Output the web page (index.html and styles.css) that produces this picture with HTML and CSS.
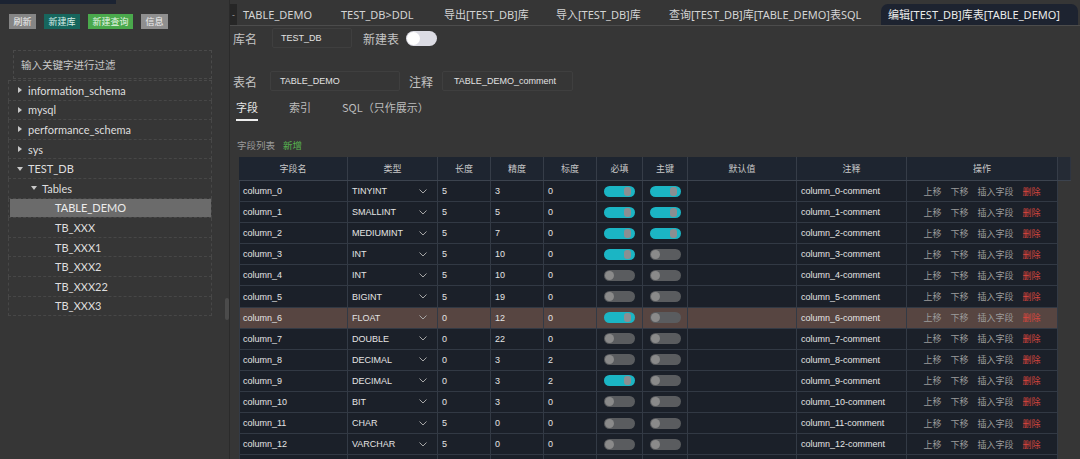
FILE: index.html
```html
<!DOCTYPE html>
<html>
<head>
<meta charset="utf-8">
<link rel="stylesheet" href="styles.css">
</head>
<body>
<div class="app">
  <aside class="side">
    <div class="side-main">
      <div class="topstrip"></div>
      <div class="btns">
        <span class="btn gray">刷新</span>
        <span class="btn teal">新建库</span>
        <span class="btn green">新建查询</span>
        <span class="btn gray2">信息</span>
      </div>
      <div class="filter">输入关键字进行过滤</div>
      <div class="tree">
        <div class="node l1"><span class="arr right"></span>information_schema</div>
        <div class="node l1"><span class="arr right"></span>mysql</div>
        <div class="node l1"><span class="arr right"></span>performance_schema</div>
        <div class="node l1"><span class="arr right"></span>sys</div>
        <div class="node l1"><span class="arr down"></span>TEST_DB</div>
        <div class="node l2"><span class="arr down"></span>Tables</div>
        <div class="node l3 sel">TABLE_DEMO</div>
        <div class="node l3">TB_XXX</div>
        <div class="node l3">TB_XXX1</div>
        <div class="node l3">TB_XXX2</div>
        <div class="node l3">TB_XXX22</div>
        <div class="node l3">TB_XXX3</div>
      </div>
    </div>
    <div class="sscroll"><div class="thumb"></div></div>
  </aside>

  <main class="main">
    <div class="tabs">
      <div class="tab t1"><span class="tabclose">-</span>TABLE_DEMO</div>
      <div class="tab t2">TEST_DB&gt;DDL</div>
      <div class="tab t3">导出[TEST_DB]库</div>
      <div class="tab t4">导入[TEST_DB]库</div>
      <div class="tab t5">查询[TEST_DB]库[TABLE_DEMO]表SQL</div>
      <div class="tab t6 active">编辑[TEST_DB]库表[TABLE_DEMO]</div>
    </div>

    <div class="content">
      <div class="frow r1">
        <span class="lbl">库名</span>
        <span class="inp i1">TEST_DB</span>
        <span class="lbl l-new">新建表</span>
        <span class="bigsw"><span class="bigknob"></span></span>
      </div>
      <div class="frow r2">
        <span class="lbl">表名</span>
        <span class="inp i2">TABLE_DEMO</span>
        <span class="lbl l-cmt">注释</span>
        <span class="inp i3">TABLE_DEMO_comment</span>
      </div>
      <div class="subtabs">
        <span class="stab on">字段</span>
        <span class="stab">索引</span>
        <span class="stab">SQL（只作展示）</span>
      </div>
      <div class="listhead"><span>字段列表</span><span class="add">新增</span></div>

      <div class="grid">
        <div class="hrow">
          <div class="hc">字段名</div>
          <div class="hc">类型</div>
          <div class="hc">长度</div>
          <div class="hc">精度</div>
          <div class="hc">标度</div>
          <div class="hc">必填</div>
          <div class="hc">主键</div>
          <div class="hc">默认值</div>
          <div class="hc">注释</div>
          <div class="hc">操作</div>
          <div class="hc gutter"></div>
        </div>

        <div class="row">
          <div class="c">column_0</div>
          <div class="c type">TINYINT<svg class="chev" width="8" height="5" viewBox="0 0 8 5"><polyline points="0.5,0.5 4,4 7.5,0.5"/></svg></div>
          <div class="c">5</div><div class="c">3</div><div class="c">0</div>
          <div class="c sw"><span class="tg on"><span class="kn"></span></span></div>
          <div class="c sw"><span class="tg on"><span class="kn"></span></span></div>
          <div class="c"></div>
          <div class="c">column_0-comment</div>
          <div class="c act"><span>上移</span><span>下移</span><span>插入字段</span><span class="del">删除</span></div>
        </div>
        <div class="row">
          <div class="c">column_1</div>
          <div class="c type">SMALLINT<svg class="chev" width="8" height="5" viewBox="0 0 8 5"><polyline points="0.5,0.5 4,4 7.5,0.5"/></svg></div>
          <div class="c">5</div><div class="c">5</div><div class="c">0</div>
          <div class="c sw"><span class="tg on"><span class="kn"></span></span></div>
          <div class="c sw"><span class="tg on"><span class="kn"></span></span></div>
          <div class="c"></div>
          <div class="c">column_1-comment</div>
          <div class="c act"><span>上移</span><span>下移</span><span>插入字段</span><span class="del">删除</span></div>
        </div>
        <div class="row">
          <div class="c">column_2</div>
          <div class="c type">MEDIUMINT<svg class="chev" width="8" height="5" viewBox="0 0 8 5"><polyline points="0.5,0.5 4,4 7.5,0.5"/></svg></div>
          <div class="c">5</div><div class="c">7</div><div class="c">0</div>
          <div class="c sw"><span class="tg on"><span class="kn"></span></span></div>
          <div class="c sw"><span class="tg on"><span class="kn"></span></span></div>
          <div class="c"></div>
          <div class="c">column_2-comment</div>
          <div class="c act"><span>上移</span><span>下移</span><span>插入字段</span><span class="del">删除</span></div>
        </div>
        <div class="row">
          <div class="c">column_3</div>
          <div class="c type">INT<svg class="chev" width="8" height="5" viewBox="0 0 8 5"><polyline points="0.5,0.5 4,4 7.5,0.5"/></svg></div>
          <div class="c">5</div><div class="c">10</div><div class="c">0</div>
          <div class="c sw"><span class="tg on"><span class="kn"></span></span></div>
          <div class="c sw"><span class="tg"><span class="kn"></span></span></div>
          <div class="c"></div>
          <div class="c">column_3-comment</div>
          <div class="c act"><span>上移</span><span>下移</span><span>插入字段</span><span class="del">删除</span></div>
        </div>
        <div class="row">
          <div class="c">column_4</div>
          <div class="c type">INT<svg class="chev" width="8" height="5" viewBox="0 0 8 5"><polyline points="0.5,0.5 4,4 7.5,0.5"/></svg></div>
          <div class="c">5</div><div class="c">10</div><div class="c">0</div>
          <div class="c sw"><span class="tg"><span class="kn"></span></span></div>
          <div class="c sw"><span class="tg"><span class="kn"></span></span></div>
          <div class="c"></div>
          <div class="c">column_4-comment</div>
          <div class="c act"><span>上移</span><span>下移</span><span>插入字段</span><span class="del">删除</span></div>
        </div>
        <div class="row">
          <div class="c">column_5</div>
          <div class="c type">BIGINT<svg class="chev" width="8" height="5" viewBox="0 0 8 5"><polyline points="0.5,0.5 4,4 7.5,0.5"/></svg></div>
          <div class="c">5</div><div class="c">19</div><div class="c">0</div>
          <div class="c sw"><span class="tg"><span class="kn"></span></span></div>
          <div class="c sw"><span class="tg"><span class="kn"></span></span></div>
          <div class="c"></div>
          <div class="c">column_5-comment</div>
          <div class="c act"><span>上移</span><span>下移</span><span>插入字段</span><span class="del">删除</span></div>
        </div>
        <div class="row hl">
          <div class="c">column_6</div>
          <div class="c type">FLOAT<svg class="chev" width="8" height="5" viewBox="0 0 8 5"><polyline points="0.5,0.5 4,4 7.5,0.5"/></svg></div>
          <div class="c">0</div><div class="c">12</div><div class="c">0</div>
          <div class="c sw"><span class="tg on"><span class="kn"></span></span></div>
          <div class="c sw"><span class="tg"><span class="kn"></span></span></div>
          <div class="c"></div>
          <div class="c">column_6-comment</div>
          <div class="c act"><span>上移</span><span>下移</span><span>插入字段</span><span class="del">删除</span></div>
        </div>
        <div class="row">
          <div class="c">column_7</div>
          <div class="c type">DOUBLE<svg class="chev" width="8" height="5" viewBox="0 0 8 5"><polyline points="0.5,0.5 4,4 7.5,0.5"/></svg></div>
          <div class="c">0</div><div class="c">22</div><div class="c">0</div>
          <div class="c sw"><span class="tg"><span class="kn"></span></span></div>
          <div class="c sw"><span class="tg"><span class="kn"></span></span></div>
          <div class="c"></div>
          <div class="c">column_7-comment</div>
          <div class="c act"><span>上移</span><span>下移</span><span>插入字段</span><span class="del">删除</span></div>
        </div>
        <div class="row">
          <div class="c">column_8</div>
          <div class="c type">DECIMAL<svg class="chev" width="8" height="5" viewBox="0 0 8 5"><polyline points="0.5,0.5 4,4 7.5,0.5"/></svg></div>
          <div class="c">0</div><div class="c">3</div><div class="c">2</div>
          <div class="c sw"><span class="tg"><span class="kn"></span></span></div>
          <div class="c sw"><span class="tg"><span class="kn"></span></span></div>
          <div class="c"></div>
          <div class="c">column_8-comment</div>
          <div class="c act"><span>上移</span><span>下移</span><span>插入字段</span><span class="del">删除</span></div>
        </div>
        <div class="row">
          <div class="c">column_9</div>
          <div class="c type">DECIMAL<svg class="chev" width="8" height="5" viewBox="0 0 8 5"><polyline points="0.5,0.5 4,4 7.5,0.5"/></svg></div>
          <div class="c">0</div><div class="c">3</div><div class="c">2</div>
          <div class="c sw"><span class="tg on"><span class="kn"></span></span></div>
          <div class="c sw"><span class="tg"><span class="kn"></span></span></div>
          <div class="c"></div>
          <div class="c">column_9-comment</div>
          <div class="c act"><span>上移</span><span>下移</span><span>插入字段</span><span class="del">删除</span></div>
        </div>
        <div class="row">
          <div class="c">column_10</div>
          <div class="c type">BIT<svg class="chev" width="8" height="5" viewBox="0 0 8 5"><polyline points="0.5,0.5 4,4 7.5,0.5"/></svg></div>
          <div class="c">0</div><div class="c">3</div><div class="c">0</div>
          <div class="c sw"><span class="tg"><span class="kn"></span></span></div>
          <div class="c sw"><span class="tg"><span class="kn"></span></span></div>
          <div class="c"></div>
          <div class="c">column_10-comment</div>
          <div class="c act"><span>上移</span><span>下移</span><span>插入字段</span><span class="del">删除</span></div>
        </div>
        <div class="row">
          <div class="c">column_11</div>
          <div class="c type">CHAR<svg class="chev" width="8" height="5" viewBox="0 0 8 5"><polyline points="0.5,0.5 4,4 7.5,0.5"/></svg></div>
          <div class="c">5</div><div class="c">0</div><div class="c">0</div>
          <div class="c sw"><span class="tg"><span class="kn"></span></span></div>
          <div class="c sw"><span class="tg"><span class="kn"></span></span></div>
          <div class="c"></div>
          <div class="c">column_11-comment</div>
          <div class="c act"><span>上移</span><span>下移</span><span>插入字段</span><span class="del">删除</span></div>
        </div>
        <div class="row">
          <div class="c">column_12</div>
          <div class="c type">VARCHAR<svg class="chev" width="8" height="5" viewBox="0 0 8 5"><polyline points="0.5,0.5 4,4 7.5,0.5"/></svg></div>
          <div class="c">5</div><div class="c">0</div><div class="c">0</div>
          <div class="c sw"><span class="tg"><span class="kn"></span></span></div>
          <div class="c sw"><span class="tg"><span class="kn"></span></span></div>
          <div class="c"></div>
          <div class="c">column_12-comment</div>
          <div class="c act"><span>上移</span><span>下移</span><span>插入字段</span><span class="del">删除</span></div>
        </div>
        <div class="row">
          <div class="c"></div><div class="c"></div><div class="c"></div><div class="c"></div><div class="c"></div>
          <div class="c"></div><div class="c"></div><div class="c"></div><div class="c"></div><div class="c"></div>
        </div>
      </div>
    </div>
  </main>
</div>
</body>
</html>
```

FILE: styles.css
```css
* { box-sizing: border-box; }

html, body {
  margin: 0;
  height: 459px;
  overflow: hidden;
  background: #363636;
  color: #dcdcdc;
  font-family: "Noto Sans", "Noto Sans CJK SC", sans-serif;
}

.app {
  display: flex;
  height: 459px;
}

/* ---------- sidebar ---------- */
.side {
  width: 229px;
  flex: none;
  display: flex;
}
.side-main { width: 225px; }
.sscroll { width: 4px; }
.thumb {
  margin-top: 298px;
  height: 22px;
  border-radius: 2px;
  background: #4b4b4b;
}

.topstrip {
  width: 116px;
  height: 4px;
  background: #1b2332;
}

.btns {
  display: flex;
  gap: 8px;
  padding: 10px 0 0 9px;
}
.btn {
  font-family: "Noto Sans CJK SC", sans-serif;
  font-size: 9px;
  line-height: 15px;
  height: 15px;
  padding: 0 4.5px;
  color: #f0f0f0;
}
.btn.gray { background: #858585; }
.btn.teal { background: #17665d; color: #d8efe9; }
.btn.green { background: #4aa94c; color: #e6f6e6; }
.btn.gray2 { background: #8f8f8f; }

.filter {
  margin: 21px 0 0 13px;
  width: 199px;
  height: 29px;
  border: 1px dashed #4a4a4a;
  padding-left: 7px;
  font-family: "Noto Sans CJK SC", sans-serif;
  font-size: 10.5px;
  line-height: 27px;
  color: #c9c9c9;
}

.tree {
  margin: 1px 0 0 8px;
  width: 204px;
  border-top: 1px dashed #4a4a4a;
}
.node {
  height: 19.6px;
  border: 1px dashed #474747;
  border-top: none;
  display: flex;
  align-items: center;
  font-family: "Lato", "Noto Sans", sans-serif;
  font-size: 11px;
  color: #dedede;
  white-space: nowrap;
}
.node.l1 { padding-left: 8px; }
.node.l2 { padding-left: 22px; }
.node.l3 { padding-left: 46px; }
.node.sel {
  background: linear-gradient(#6b6b6b, #6b6b6b) 1px 0 / calc(100% - 1px) 100% no-repeat;
  color: #ececec;
}
.arr {
  width: 0;
  height: 0;
  flex: none;
}
.arr.right {
  border-left: 4px solid #c8c8c8;
  border-top: 3px solid transparent;
  border-bottom: 3px solid transparent;
  margin-left: 1px;
  margin-right: 6px;
}
.arr.down {
  border-top: 4px solid #c8c8c8;
  border-left: 3px solid transparent;
  border-right: 3px solid transparent;
  margin-right: 5px;
}

/* ---------- main ---------- */
.main {
  flex: 1;
  min-width: 0;
  border-left: 1px solid #2b2b2b;
  display: flex;
  flex-direction: column;
}

.tabs {
  height: 26px;
  padding-top: 4px;
  border-bottom: 1px solid #4c4c4c;
  display: flex;
}
.tab {
  flex: none;
  font-size: 11px;
  line-height: 21px;
  color: #d4d4d4;
  white-space: nowrap;
  padding-left: 15px;
  font-family: "Noto Sans", "Noto Sans CJK SC", sans-serif;
}
.tab.t1 { width: 96px; padding-left: 0; display: flex; }
.tabclose {
  width: 7px;
  background: #262626;
  color: #9a9a9a;
  margin-right: 6px;
  text-align: center;
  font-size: 9px;
}
.tab.t2 { width: 103px; }
.tab.t3 { width: 112px; }
.tab.t4 { width: 113px; }
.tab.t5 { width: 227px; }
.tab.t6 { width: 197px; }
.tab.active {
  background: #1d2330;
  border-radius: 7px 7px 0 0;
  padding-left: 7px;
  color: #ebebeb;
}

.content {
  padding-left: 3px;
}

.frow {
  display: flex;
  align-items: center;
  height: 20px;
}
.frow.r1 { margin-top: 2px; }
.frow.r2 { margin-top: 23px; }

.lbl {
  font-family: "Noto Sans CJK SC", sans-serif;
  font-size: 12px;
  color: #c4c4c4;
  white-space: nowrap;
}
.inp {
  height: 20px;
  border: 1px solid #3f3f3f;
  border-radius: 2px;
  font-family: "Liberation Sans", sans-serif;
  font-size: 9px;
  line-height: 18px;
  color: #e2e2e2;
  padding-left: 8px;
}
.i1 { margin-left: 15px; width: 80px; }
.i2 { margin-left: 13px; width: 130px; padding-left: 9px; }
.i3 { margin-left: 9px; width: 131px; padding-left: 11px; }
.l-new { margin-left: 11px; }
.l-cmt { margin-left: 9px; }

.bigsw {
  margin-left: 7px;
  width: 31px;
  height: 15px;
  border-radius: 8px;
  background: #dcdce4;
  display: flex;
  align-items: center;
  padding-left: 1px;
}
.bigknob {
  width: 13px;
  height: 13px;
  border-radius: 50%;
  background: #ffffff;
}

.subtabs {
  margin-top: 8px;
  display: flex;
  align-items: flex-start;
  gap: 31px;
  padding-left: 3px;
}
.stab {
  font-family: "Noto Sans CJK SC", sans-serif;
  font-size: 11px;
  line-height: 16px;
  color: #bdbdbd;
  padding-bottom: 4px;
  border-bottom: 2px solid transparent;
}
.stab.on {
  color: #e6e6e6;
  border-bottom-color: #eeeeee;
}

.listhead {
  margin-top: 17px;
  padding-left: 4px;
  display: flex;
  gap: 8px;
  font-family: "Noto Sans CJK SC", sans-serif;
  font-size: 9.5px;
  line-height: 14px;
  color: #9a9a9a;
}
.listhead .add { color: #57b34f; }

/* ---------- field grid ---------- */
.grid {
  margin: 5px 0 0 6px;
  width: 832px;
  font-family: "Liberation Sans", "Noto Sans CJK SC", sans-serif;
  font-size: 9px;
}
.hrow, .row {
  display: grid;
  grid-template-columns: 109px 90px 53px 53px 53px 46px 45px 109px 110px 151px;
}
.hrow {
  grid-template-columns: 109px 90px 53px 53px 53px 46px 45px 109px 110px 151px 13px;
  height: 24px;
  background: #1e2530;
  border-bottom: 1px solid #3c434e;
}
.hc {
  border-right: 1px solid #363d48;
  display: flex;
  align-items: center;
  justify-content: center;
  font-family: "Noto Sans CJK SC", sans-serif;
  color: #c9c9c9;
}
.hc.gutter { background: #252b35; border-right: 1px solid #2e3440; }

.row {
  width: 819px;
  height: 21.1px;
  background: #1b2029;
  border-bottom: 1px solid #323944;
  color: #e4e4e4;
}
.row.hl { background: #574541; }
.c {
  border-right: 1px solid #333a45;
  display: flex;
  align-items: center;
  padding-left: 4px;
  white-space: nowrap;
  overflow: hidden;
}
.c:first-child { padding-left: 3px; border-left: 1px solid #333a45; }
.c.type {
  justify-content: space-between;
  padding-right: 10px;
}
.chev {
  fill: none;
  stroke: #a6a6a6;
  stroke-width: 1;
}
.c.sw {
  justify-content: center;
  padding-left: 0;
}
.tg {
  width: 31px;
  height: 11px;
  border-radius: 6px;
  background: #5a5c5f;
  display: flex;
  align-items: center;
  padding: 0 1px;
}
.kn {
  width: 9px;
  height: 9px;
  border-radius: 50%;
  background: #8a8a8a;
}
.tg.on {
  background: #1bb5c4;
  justify-content: flex-end;
  padding-right: 4px;
}
.tg.on .kn {
  background: #8b8f92;
  border-radius: 3px;
  width: 7px;
}
.c.act {
  justify-content: center;
  gap: 9px;
  padding-left: 0;
  font-family: "Noto Sans CJK SC", sans-serif;
  color: #9c9c9c;
}
.c.act .del { color: #d8453d; }
```
